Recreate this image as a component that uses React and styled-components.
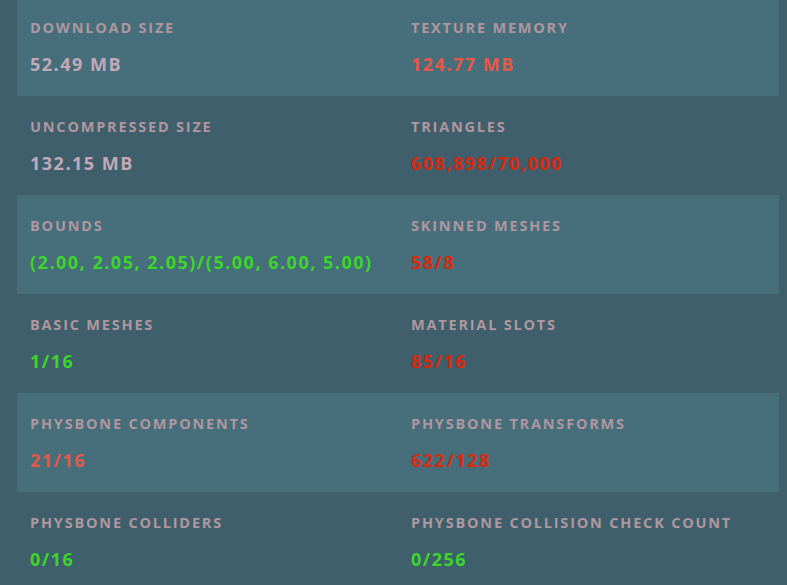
import React from 'react';
import styled, { createGlobalStyle } from 'styled-components';

const GlobalStyle = createGlobalStyle`
    html, body {
        margin: 0;
        padding: 0;
        background: #3e5f6b;
        overflow: hidden;
    }
`

const tones = {
    plain: '#c3a9b6',
    warn: '#e65848',
    bad: '#d62a0e',
    good: '#3cd62b',
}

const Page = styled.div`
    padding: 0 8px 0 17px;
    margin-top: -3px;
    font-family: "Open Sans", "Noto Sans", sans-serif;
`

const Row = styled.div`
    display: grid;
    grid-template-columns: 1fr 1fr;
    height: 99px;
    box-sizing: border-box;
    background: ${p => (p.$striped ? '#466e7b' : 'transparent')};
`

const Cell = styled.div`
    padding: 22px 13px 0;
`

const Label = styled.div`
    font-size: 14.5px;
    font-weight: 700;
    line-height: 18px;
    letter-spacing: 1.8px;
    text-transform: uppercase;
    color: #b0979f;
    white-space: nowrap;
`

const Value = styled.div`
    margin-top: 15px;
    font-size: 18px;
    font-weight: 700;
    line-height: 24px;
    letter-spacing: 1.5px;
    color: ${p => tones[p.$tone] || tones.plain};
    white-space: nowrap;
`

const rows = [
    [
        { label: 'Download Size', value: '52.49 MB', tone: 'plain' },
        { label: 'Texture Memory', value: '124.77 MB', tone: 'warn' },
    ],
    [
        { label: 'Uncompressed Size', value: '132.15 MB', tone: 'plain' },
        { label: 'Triangles', value: '608,898/70,000', tone: 'bad' },
    ],
    [
        { label: 'Bounds', value: '(2.00, 2.05, 2.05)/(5.00, 6.00, 5.00)', tone: 'good' },
        { label: 'Skinned Meshes', value: '58/8', tone: 'bad' },
    ],
    [
        { label: 'Basic Meshes', value: '1/16', tone: 'good' },
        { label: 'Material Slots', value: '85/16', tone: 'bad' },
    ],
    [
        { label: 'PhysBone Components', value: '21/16', tone: 'warn' },
        { label: 'PhysBone Transforms', value: '622/128', tone: 'bad' },
    ],
    [
        { label: 'PhysBone Colliders', value: '0/16', tone: 'good' },
        { label: 'PhysBone Collision Check Count', value: '0/256', tone: 'good' },
    ],
]

export default function App() {
    return (
        <>
            <GlobalStyle />
            <Page>
                {rows.map((row, i) => (
                    <Row key={i} $striped={i % 2 === 0}>
                        {row.map(stat => (
                            <Cell key={stat.label}>
                                <Label>{stat.label}</Label>
                                <Value $tone={stat.tone}>{stat.value}</Value>
                            </Cell>
                        ))}
                    </Row>
                ))}
            </Page>
        </>
    )
}
